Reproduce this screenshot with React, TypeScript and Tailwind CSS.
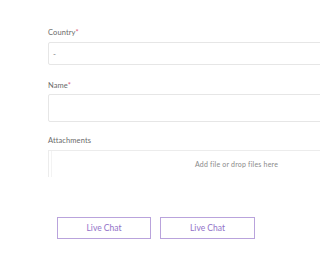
import React from "react";

function Label({ text, required }: { text: string; required?: boolean }) {
    return (
        <div className="text-[7.5px] leading-[10px] text-[#6a6a6a] tracking-[0.1px]">
            {text}
            {required && <span className="text-[#e0607e]">*</span>}
        </div>
    );
}

export default function App() {
    return (
        <div className="w-[320px] h-[256px] overflow-hidden bg-white font-['Lato','Noto_Sans',sans-serif]">
            <div className="w-[380px] pl-[48px] pt-[28px]">

                {/* Country */}
                <Label text="Country" required />
                <div className="mt-[4px] h-[23px] w-[380px] rounded-[2px] border border-[#e6e6e6] flex items-center px-[4px] text-[8px] text-[#777]">
                    -
                </div>

                {/* Name */}
                <div className="mt-[16px]">
                    <Label text="Name" required />
                </div>
                <div className="mt-[3px] h-[28px] w-[380px] rounded-[2px] border border-[#e6e6e6]" />

                {/* Attachments */}
                <div className="mt-[14px]">
                    <Label text="Attachments" />
                </div>
                <div className="mt-[4px] h-[27px] w-[380px] border border-b-0 border-[#ececec] flex">
                    <div className="w-[3px] border-r border-[#f3f3f3]" />
                    <div className="flex-1 flex justify-center pt-[8px] pr-[6px] text-[7px] tracking-[0.2px] text-[#8a8a8a]">
                        Add file or drop files here
                    </div>
                </div>
            </div>

            {/* Actions */}
            <div className="flex gap-[9px] pl-[57px] pt-[40px]">
                <button className="w-[94px] h-[22px] border border-[#b9a3dc] text-[8.5px] text-[#9272c9]">
                    Live Chat
                </button>
                <button className="w-[95px] h-[22px] border border-[#b9a3dc] text-[8.5px] text-[#9272c9]">
                    Live Chat
                </button>
            </div>
        </div>
    );
}
